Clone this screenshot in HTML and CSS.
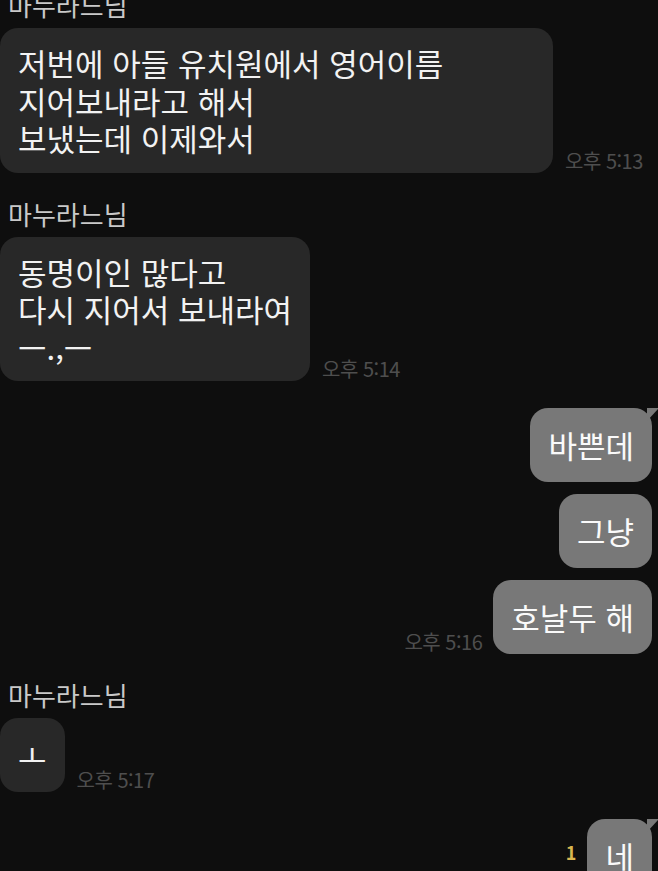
FILE: index.html
```html
<!DOCTYPE html>
<html lang="ko">
<head>
  <meta charset="UTF-8" />
  <meta name="viewport" content="width=device-width, initial-scale=1.0" />
  <title>대화</title>
  <link rel="stylesheet" href="styles.css">
</head>
<body>
  <div class="chat">
    <div class="group left">
      <div class="name">마누라느님</div>
      <div class="row">
        <div class="bubble multi wide">저번에 아들 유치원에서 영어이름<br>지어보내라고 해서<br>보냈는데 이제와서</div>
        <span class="time">오후 5:13</span>
      </div>
    </div>

    <div class="group left">
      <div class="name">마누라느님</div>
      <div class="row">
        <div class="bubble multi">동명이인 많다고<br>다시 지어서 보내라여<br>ㅡ.,ㅡ</div>
        <span class="time">오후 5:14</span>
      </div>
    </div>

    <div class="group right">
      <div class="row">
        <div class="bubble tail">바쁜데</div>
      </div>
      <div class="row">
        <div class="bubble">그냥</div>
      </div>
      <div class="row">
        <span class="time">오후 5:16</span>
        <div class="bubble">호날두 해</div>
      </div>
    </div>

    <div class="group left">
      <div class="name">마누라느님</div>
      <div class="row">
        <div class="bubble">ㅗ</div>
        <span class="time">오후 5:17</span>
      </div>
    </div>

    <div class="group right">
      <div class="row">
        <span class="unread">1</span>
        <div class="bubble tail">네</div>
      </div>
    </div>
  </div>
</body>
</html>
```

FILE: styles.css
```css
body {
  margin: 0;
  background: #0e0e0e;
  font-family: "Noto Sans CJK KR", "Noto Sans", sans-serif;
  color: #f2f2f2;
  overflow: hidden;
  height: 871px;
}
.chat {
  display: flex;
  flex-direction: column;
  gap: 27px;
  margin-top: -9px;
  padding-right: 6px;
}
.group {
  display: flex;
  flex-direction: column;
}
.group.left {
  gap: 9px;
}
.group.right {
  gap: 12px;
}
.name {
  padding-left: 8px;
  font-size: 26px;
  line-height: 28px;
  color: #c9c9c9;
}
.row {
  display: flex;
  align-items: flex-end;
  gap: 12px;
}
.right .row {
  justify-content: flex-end;
  gap: 11px;
}
.bubble {
  position: relative;
  padding: 18px;
  font-size: 31px;
  line-height: 38px;
  border-radius: 18px;
  background: #282828;
  white-space: nowrap;
}
.bubble.multi {
  padding: 16px 18px;
  line-height: 37.5px;
}
.bubble.wide {
  width: 517px;
}
.right .bubble {
  background: #787878;
  color: #fafafa;
}
.bubble.tail::after {
  content: "";
  position: absolute;
  top: 0;
  right: -7px;
  width: 12px;
  height: 13px;
  background: #787878;
  clip-path: polygon(0 0, 100% 0, 0 100%);
}
.time {
  margin-bottom: 1px;
  font-size: 20px;
  line-height: 22px;
  letter-spacing: -0.5px;
  color: #4e4e4e;
  white-space: nowrap;
}
.unread {
  margin-bottom: 30px;
  font-size: 18px;
  font-weight: bold;
  line-height: 22px;
  color: #d9b650;
}
```
